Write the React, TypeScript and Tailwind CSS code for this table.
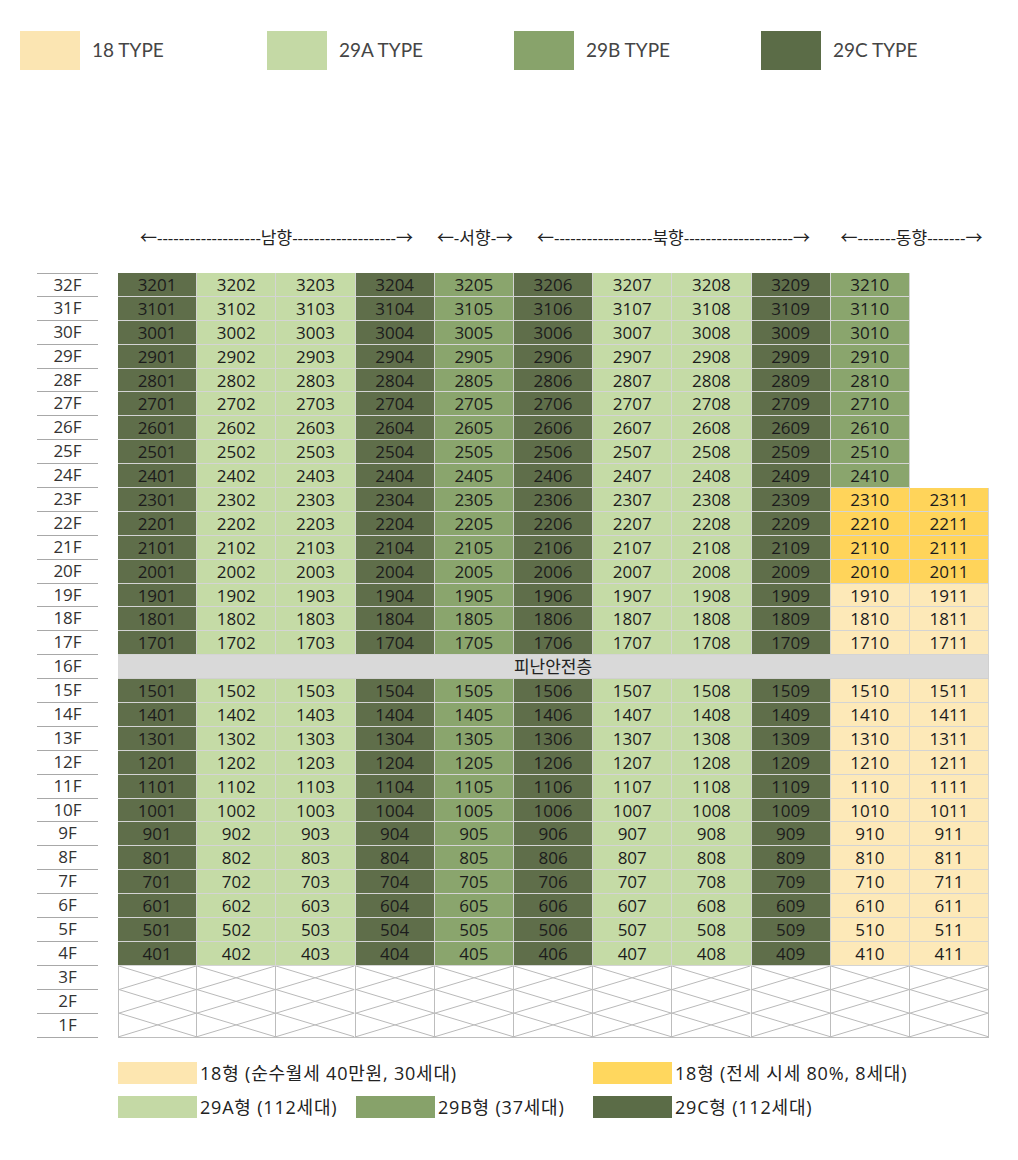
import React from 'react';

type Kind = 'C' | 'A' | 'B' | 'Y' | 'J' | null;

const BG: Record<string, string> = {
  C: 'bg-[#5f6e4a]',
  A: 'bg-[#c5dba6]',
  B: 'bg-[#8aa56d]',
  Y: 'bg-[#fde9b8]',
  J: 'bg-[#ffd45a]',
};

const BASE: Kind[] = ['C', 'A', 'A', 'C', 'B', 'C', 'A', 'A', 'C'];

const rowKinds = (floor: number): Kind[] => {
  if (floor >= 24) return [...BASE, 'B', null];
  if (floor >= 20) return [...BASE, 'J', 'J'];
  return [...BASE, 'Y', 'Y'];
};

const FLOORS = Array.from({ length: 29 }, (_, i) => 32 - i).filter((f) => f >= 4);

const FloorLabel: React.FC<{ label: string; first?: boolean }> = ({ label, first }) => (
  <div
    className={`ml-[37px] mr-[20px] w-[61px] shrink-0 border-b border-[#a8a8a8] text-center leading-[22px] text-[#333] ${
      first ? 'border-t' : ''
    }`}
  >
    {label}
  </div>
);

const UnitRow: React.FC<{ floor: number; first?: boolean }> = ({ floor, first }) => {
  if (floor === 16) {
    return (
      <div className="flex h-[23.9px]">
        <FloorLabel label="16F" />
        <div className="w-[871px] border-b border-r border-[#d0d0d0] bg-[#d9d9d9] text-center leading-[23px] text-[#222]">
          피난안전층
        </div>
      </div>
    );
  }
  return (
    <div className="flex h-[23.9px]">
      <FloorLabel label={`${floor}F`} first={first} />
      <div className="flex">
        {rowKinds(floor).map((k, i) =>
          k ? (
            <div
              key={i}
              className={`w-[79.2px] border-b border-r border-[#d4d4d4] text-center leading-[23px] text-[#1c1c1c] ${BG[k]}`}
            >
              {floor * 100 + i + 1}
            </div>
          ) : (
            <div key={i} className="w-[79.2px]" />
          )
        )}
      </div>
    </div>
  );
};

const Crossed: React.FC = () => (
  <svg className="h-full w-full" viewBox="0 0 100 3" preserveAspectRatio="none">
    {[0, 1, 2].map((r) => (
      <g key={r} stroke="#b9b9b9" strokeWidth="1">
        <line x1="0" y1={r} x2="100" y2={r + 1} vectorEffect="non-scaling-stroke" />
        <line x1="0" y1={r + 1} x2="100" y2={r} vectorEffect="non-scaling-stroke" />
      </g>
    ))}
  </svg>
);

const TopLegend: React.FC = () => {
  const items = [
    { c: 'bg-[#fbe5b2]', t: '18 TYPE' },
    { c: 'bg-[#c4d9a5]', t: '29A TYPE' },
    { c: 'bg-[#88a36b]', t: '29B TYPE' },
    { c: 'bg-[#5b6c47]', t: '29C TYPE' },
  ];
  return (
    <div className="flex pl-[20px] pt-[31px] font-['Lato',sans-serif] text-[19px] text-[#454545]">
      {items.map((it) => (
        <div key={it.t} className="flex w-[247px] items-center">
          <div className={`h-[39px] w-[60px] ${it.c}`} />
          <span className="ml-[12px]">{it.t}</span>
        </div>
      ))}
    </div>
  );
};

const Swatch: React.FC<{ c: string; t: string; w: string }> = ({ c, t, w }) => (
  <div className={`flex h-[22px] items-center ${w}`}>
    <div className={`h-[22px] w-[79px] shrink-0 ${c}`} />
    <span className="ml-[3px] whitespace-nowrap">{t}</span>
  </div>
);

export default function App() {
  return (
    <div className="h-[1160px] w-[1018px] bg-white">
      <TopLegend />

      <div className="font-['Open_Sans','Noto_Sans_CJK_KR',sans-serif] text-[17px]">
        <div className="mt-[156px] flex pl-[118px] leading-[24px] text-[#222]">
          <div className="w-[317px] text-center">←-------------------남향-------------------→</div>
          <div className="w-[80px] text-center">←-서향-→</div>
          <div className="w-[317px] text-center">←------------------북향--------------------→</div>
          <div className="w-[159px] text-center">←-------동향-------→</div>
        </div>

        <div className="mt-[23px]">
          {FLOORS.map((f, i) => (
            <UnitRow key={f} floor={f} first={i === 0} />
          ))}
          <div className="flex h-[71.7px]">
            <div className="ml-[37px] mr-[20px] flex w-[61px] shrink-0 flex-col">
              {['3F', '2F', '1F'].map((l) => (
                <div key={l} className="h-[23.9px] border-b border-[#a8a8a8] text-center leading-[22px] text-[#333]">
                  {l}
                </div>
              ))}
            </div>
            <div className="flex border-b border-[#bdbdbd]">
              {Array.from({ length: 11 }, (_, i) => (
                <div key={i} className="w-[79.2px] border-r border-[#bdbdbd] first:border-l">
                  <Crossed />
                </div>
              ))}
            </div>
          </div>
        </div>

        <div className="mt-[24px] pl-[118px] text-[18px] leading-[22px] tracking-[0.8px] text-[#222]">
          <div className="flex">
            <Swatch c="bg-[#fde6b0]" t="18형 (순수월세 40만원, 30세대)" w="w-[475px]" />
            <Swatch c="bg-[#ffd75e]" t="18형 (전세 시세 80%, 8세대)" w="" />
          </div>
          <div className="mt-[12px] flex">
            <Swatch c="bg-[#c4d9a5]" t="29A형 (112세대)" w="w-[238px]" />
            <Swatch c="bg-[#87a26a]" t="29B형 (37세대)" w="w-[237px]" />
            <Swatch c="bg-[#5b6c47]" t="29C형 (112세대)" w="" />
          </div>
        </div>
      </div>
    </div>
  );
}
